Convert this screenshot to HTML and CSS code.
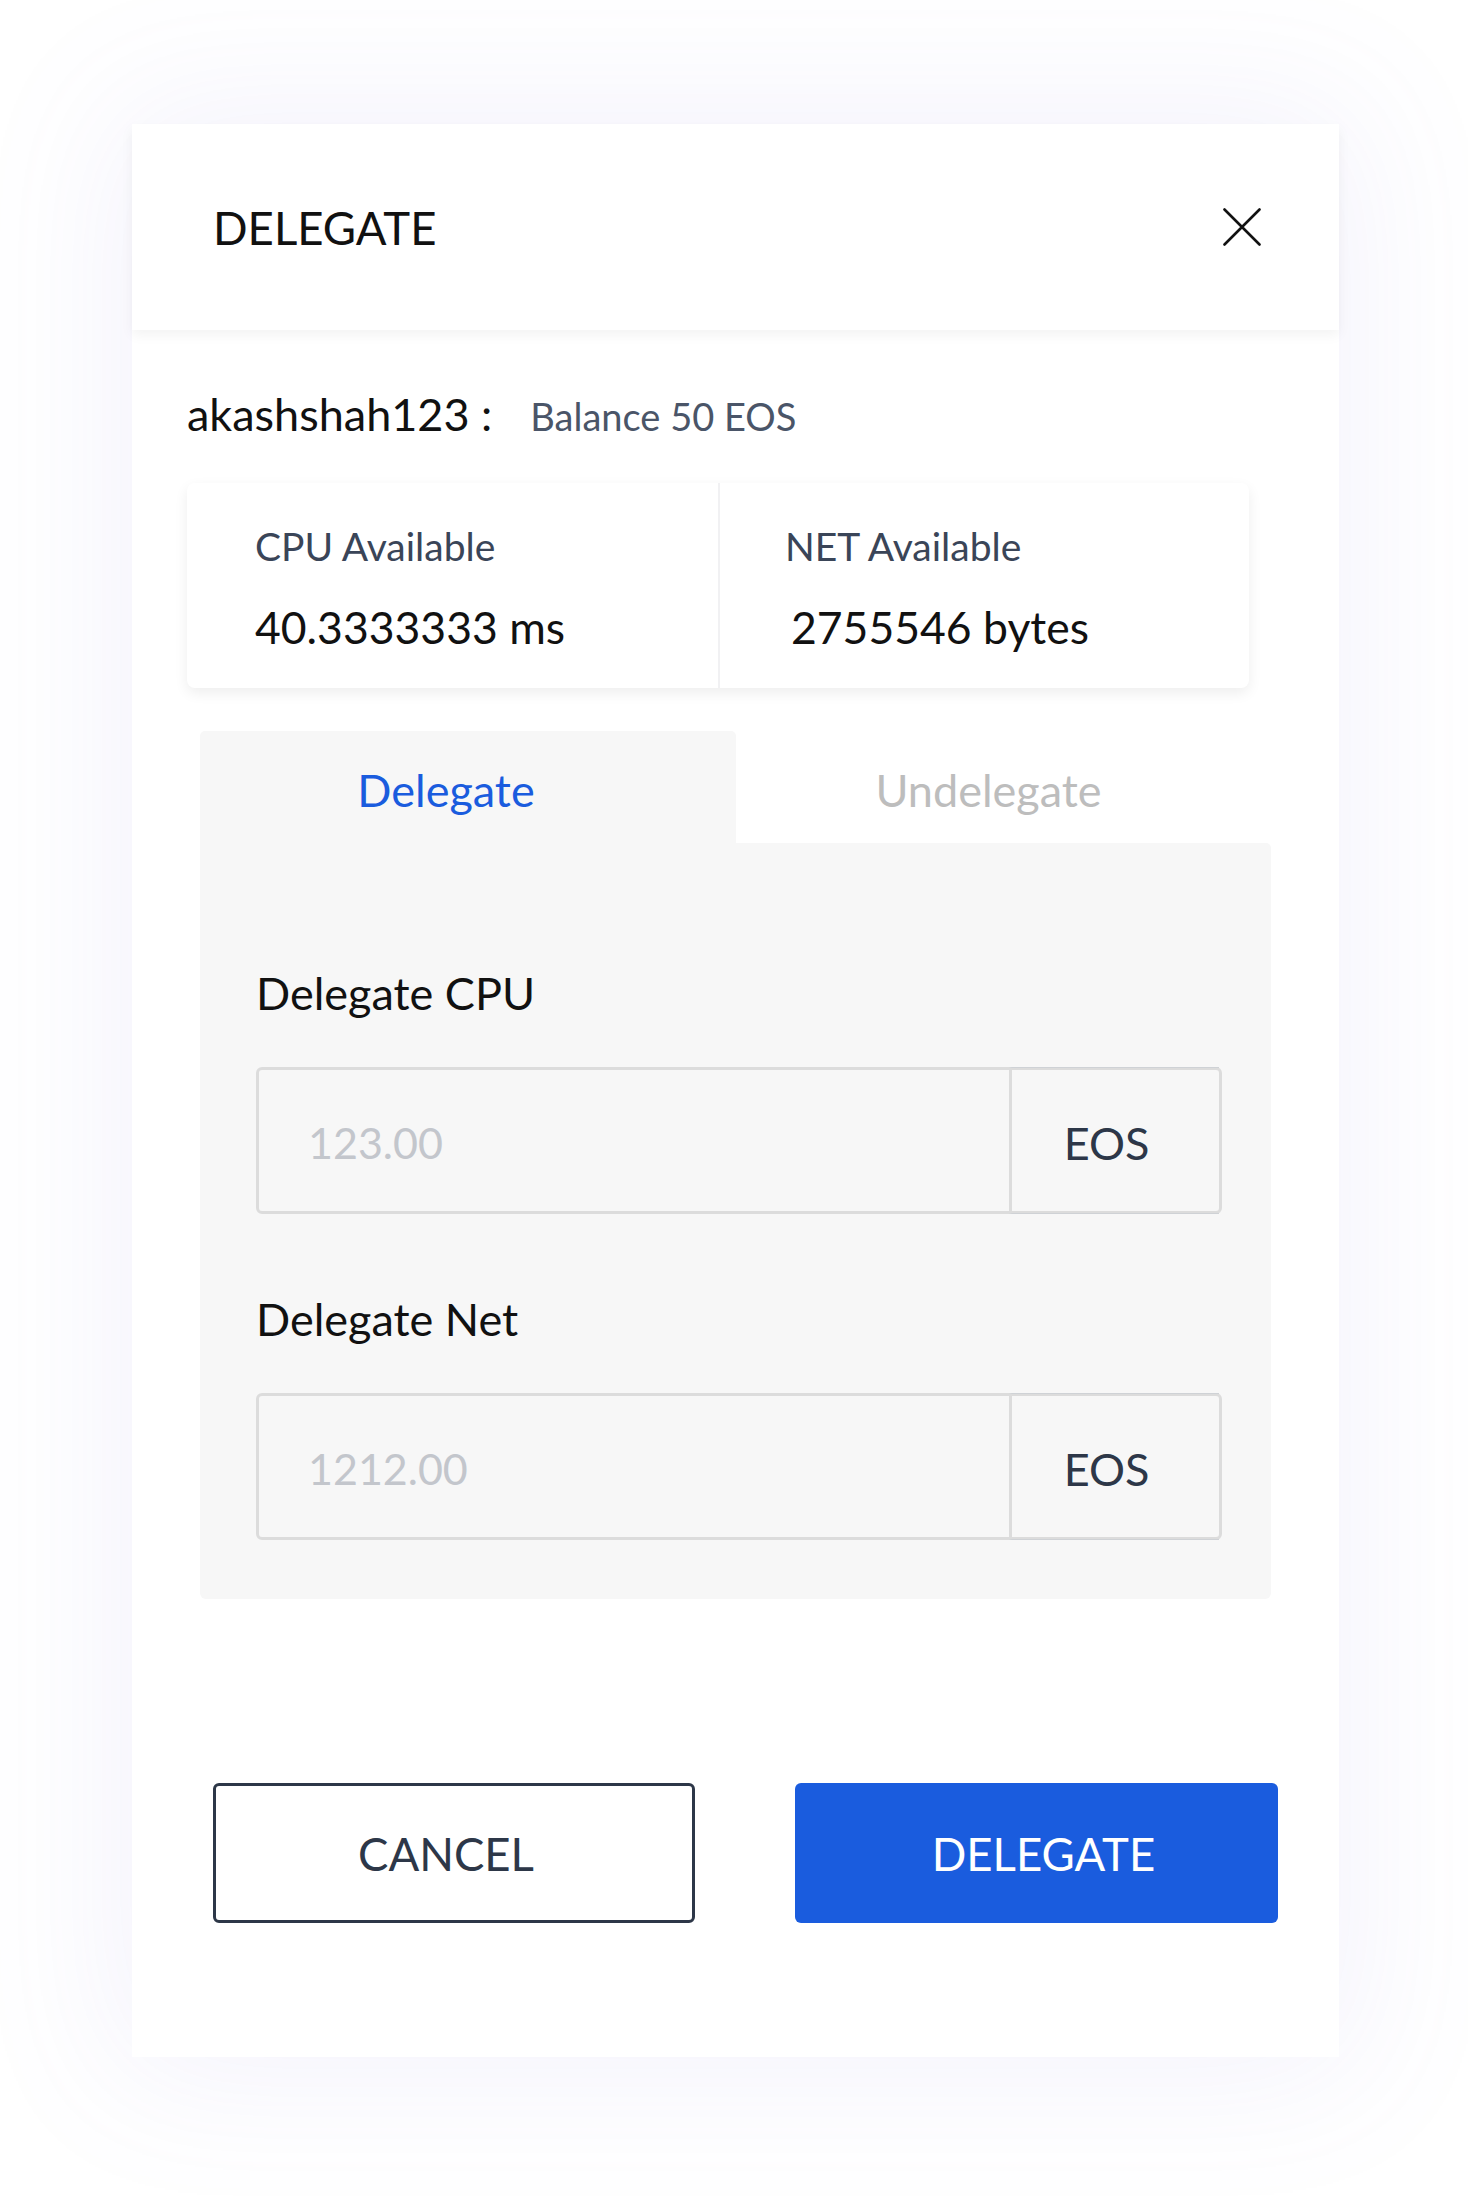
FILE: index.html
```html
<!DOCTYPE html>
<html lang="en">
<head>
<meta charset="utf-8">
<title>Delegate</title>
<link rel="stylesheet" href="styles.css">
</head>
<body>
<div class="page">
  <div class="modal">
    <div class="modal-header">
      <h2 class="title">DELEGATE</h2>
      <button class="close" aria-label="Close">
        <svg width="38" height="38" viewBox="0 0 38 38"><path d="M1.5 1.5 L36.5 36.5 M36.5 1.5 L1.5 36.5" stroke="#111" stroke-width="2.6" fill="none" stroke-linecap="round"/></svg>
      </button>
    </div>
    <div class="modal-body">
      <div class="account">
        <span class="acct-name">akashshah123 :</span>
        <span class="balance">Balance 50 EOS</span>
      </div>
      <div class="stats">
        <div class="stat">
          <div class="stat-label">CPU Available</div>
          <div class="stat-value">40.3333333 ms</div>
        </div>
        <div class="stat stat-right">
          <div class="stat-label">NET Available</div>
          <div class="stat-value stat-net">2755546 bytes</div>
        </div>
      </div>
      <div class="tabs">
        <div class="tab-row">
          <div class="tab tab-active">Delegate</div>
          <div class="tab">Undelegate</div>
        </div>
        <div class="tab-panel">
          <div class="field">
            <div class="field-label">Delegate CPU</div>
            <div class="input-group">
              <span class="input">123.00</span>
              <span class="addon">EOS</span>
            </div>
          </div>
          <div class="field field-second">
            <div class="field-label">Delegate Net</div>
            <div class="input-group">
              <span class="input">1212.00</span>
              <span class="addon">EOS</span>
            </div>
          </div>
        </div>
      </div>
      <div class="actions">
        <button class="btn btn-outline">CANCEL</button>
        <button class="btn btn-primary">DELEGATE</button>
      </div>
    </div>
  </div>
</div>
</body>
</html>
```
FILE: styles.css
```css
* { box-sizing: border-box; }
html, body { margin: 0; padding: 0; background: #ffffff; }
body { font-family: Lato, "Open Sans", sans-serif; line-height: 1.2; color: #111; }

.page { padding: 124px 0 140px 132px; }

.modal {
  width: 1207px;
  background: #fff;
  box-shadow: 0 0 140px 20px rgba(110, 100, 220, 0.08);
}

.modal-header {
  height: 206px;
  padding: 0 78px 0 81px;
  display: flex;
  align-items: center;
  justify-content: space-between;
  box-shadow: 0 5px 12px rgba(0, 0, 0, 0.05);
  position: relative;
}
.title { margin: 0; font-size: 45.5px; font-weight: 400; line-height: 53px; color: #111; }
.close { border: 0; background: none; padding: 0; width: 38px; height: 38px; display: block; }
.close svg { display: block; }

.modal-body { padding: 59px 68px 134px 55px; }

.account { display: flex; align-items: baseline; height: 50px; }
.acct-name { font-size: 45px; line-height: 50px; color: #111; }
.balance { font-size: 38px; line-height: 50px; color: #4a5568; margin-left: 38px; }

.stats {
  margin-top: 44px;
  margin-right: 22px;
  display: grid;
  grid-template-columns: 1fr 1fr;
  background: #fff;
  border-radius: 8px;
  box-shadow: 0 5px 14px rgba(0, 0, 0, 0.07);
}
.stat { padding: 41px 0 35px 68px; }
.stat-right { border-left: 2px solid #f1f1f3; padding-left: 65px; }
.stat-label { font-size: 39px; line-height: 44px; color: #3a4558; }
.stat-value { font-size: 44.5px; line-height: 52px; color: #111; margin-top: 33px; }
.stat-net { padding-left: 6px; }

.tabs { margin-top: 43px; margin-left: 13px; }
.tab-row { display: grid; grid-template-columns: 536px 1fr; }
.tab {
  height: 112px;
  display: flex;
  align-items: center;
  justify-content: center;
  padding: 7px 30px 0 0;
  font-size: 45px;
  line-height: 53px;
  color: #bdbdbd;
}
.tab-active { background: #f7f7f7; color: #1a5cde; border-radius: 5px 5px 0 0; padding-right: 44px; }

.tab-panel {
  background: #f7f7f7;
  border-radius: 0 5px 6px 6px;
  padding: 124px 49px 59px 56px;
}
.field-label { font-size: 45px; line-height: 53px; color: #111; }
.field-second { margin-top: 79px; }
.input-group {
  margin-top: 47px;
  height: 147px;
  display: flex;
  border: 3px solid #dcdcdc;
  border-radius: 6px;
}
.input {
  flex: 1;
  display: flex;
  align-items: center;
  padding: 4px 0 0 49px;
  font-size: 43px;
  color: #c3c6cc;
}
.addon {
  width: 210px;
  border-left: 3px solid #dcdcdc;
  border-top: 1px solid #cfd2d6;
  border-bottom: 1px solid #cfd2d6;
  margin: -3px 0;
  display: flex;
  align-items: center;
  justify-content: center;
  padding: 4px 18px 0 0;
  font-size: 45px;
  color: #2d3748;
}

.actions { margin-top: 184px; padding-left: 26px; display: flex; gap: 100px; }
.btn {
  flex-shrink: 0;
  width: 482px;
  height: 140px;
  font-family: Lato, "Open Sans", sans-serif;
  font-size: 45.5px;
  border-radius: 6px;
  display: flex;
  align-items: center;
  justify-content: center;
  padding: 0;
}
.btn-outline { background: #fff; border: 3px solid #2d3748; color: #2d3748; padding-right: 16px; }
.btn-primary { width: 483px; background: #1a5cde; border: 0; color: #fff; padding-left: 14px; }
```
